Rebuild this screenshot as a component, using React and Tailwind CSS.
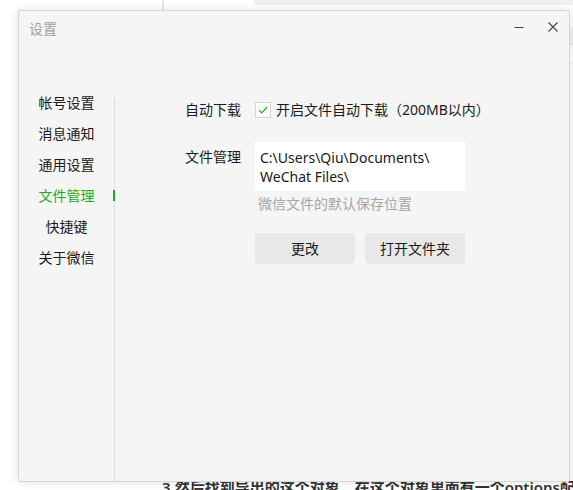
import React from 'react';

const menu = ['帐号设置', '消息通知', '通用设置', '文件管理', '快捷键', '关于微信'];

function Sidebar({ active }) {
  return (
    <div className="w-[95px] pt-[42px] flex flex-col">
      {menu.map((item) => (
        <div
          key={item}
          className={`relative h-[31px] leading-[31px] text-center text-[14px] ${
            item === active ? 'text-[#1aad19]' : 'text-[#1a1a1a]'
          }`}
        >
          {item}
          {item === active && (
            <span className="absolute right-[-1px] top-[10px] w-[2px] h-[11px] bg-[#1aad19]"></span>
          )}
        </div>
      ))}
    </div>
  );
}

function CheckBox() {
  return (
    <div className="w-[16px] h-[16px] bg-white border border-[#d4d4d4] flex items-center justify-center">
      <svg width="12" height="12" viewBox="0 0 12 12" fill="none">
        <path d="M2 6.2 L4.8 9 L10.2 3" stroke="#1aad19" strokeWidth="1.2" />
      </svg>
    </div>
  );
}

function FileSettings() {
  return (
    <div className="flex-1 pl-[70px] pt-[55px] text-[14px] text-[#1a1a1a]">
      {/* auto download */}
      <div className="flex items-center h-[20px]">
        <div className="w-[70px] leading-[20px]">自动下载</div>
        <CheckBox />
        <span className="ml-[5px] leading-[20px]">开启文件自动下载（200MB以内）</span>
      </div>

      {/* storage path */}
      <div className="flex mt-[22px]">
        <div className="w-[70px] mt-[5px] leading-[20px]">文件管理</div>
        <div>
          <div className="w-[210px] h-[49px] bg-white px-[5px] pt-[6px] leading-[19px]">
            C:\Users\Qiu\Documents\
            <br />
            WeChat Files\
          </div>
          <div className="mt-[3px] ml-[3px] leading-[20px] text-[#a6a6a6]">微信文件的默认保存位置</div>
          <div className="flex gap-[10px] mt-[19px]">
            <button className="w-[100px] h-[31px] rounded-[3px] bg-[#e8e8e8] text-[#1a1a1a]">更改</button>
            <button className="w-[100px] h-[31px] rounded-[3px] bg-[#e8e8e8] text-[#1a1a1a]">打开文件夹</button>
          </div>
        </div>
      </div>
    </div>
  );
}

function SettingsDialog() {
  return (
    <div className="absolute left-[18px] top-[10px] w-[552px] h-[472px] bg-[#f5f5f5] border border-[#d6d6d6] rounded-[2px] shadow-[0_0_8px_rgba(0,0,0,0.12)] flex flex-col">
      {/* title bar */}
      <div className="h-[34px] flex items-center justify-between pl-[10px] pr-[11px]">
        <span className="text-[14px] text-[#a0a0a0]">设置</span>
        <div className="flex items-center gap-[24px] -mt-[2px]">
          <svg width="10" height="10" viewBox="0 0 10 10">
            <path d="M0.5 5.5 H9.5" stroke="#444" strokeWidth="1" />
          </svg>
          <svg width="10" height="10" viewBox="0 0 10 10">
            <path d="M0.5 0.5 L9.5 9.5 M9.5 0.5 L0.5 9.5" stroke="#444" strokeWidth="1.1" />
          </svg>
        </div>
      </div>

      {/* body */}
      <div className="flex flex-1">
        <Sidebar active="文件管理" />
        <div className="w-px mt-[52px] bg-[#e0e0e0]"></div>
        <FileSettings />
      </div>
    </div>
  );
}

export default function App() {
  return (
    <div
      className="relative w-[573px] h-[490px] bg-white overflow-hidden"
      style={{ fontFamily: '"Noto Sans", "Noto Sans CJK SC", sans-serif' }}
    >
      {/* page behind the window */}
      <div className="absolute left-[162px] top-0 w-[2px] h-[10px] bg-[#e6e6e6]"></div>
      <div className="absolute left-[254px] top-0 w-[330px] h-[5px] rounded-b-[3px] bg-[#f0f0f0]"></div>
      <div className="absolute left-[569px] top-[27px] w-[10px] h-[18px] bg-[#f3f3f3] border-b border-[#dddddd]"></div>
      <div className="absolute left-[569px] top-[62px] w-[10px] h-px bg-[#e6e6e6]"></div>
      <div className="absolute left-[162px] top-[476px] text-[15px] font-semibold text-[#333] whitespace-nowrap">
        3.然后找到导出的这个对象，在这个对象里面有一个options配置项
      </div>

      <SettingsDialog />
    </div>
  );
}
